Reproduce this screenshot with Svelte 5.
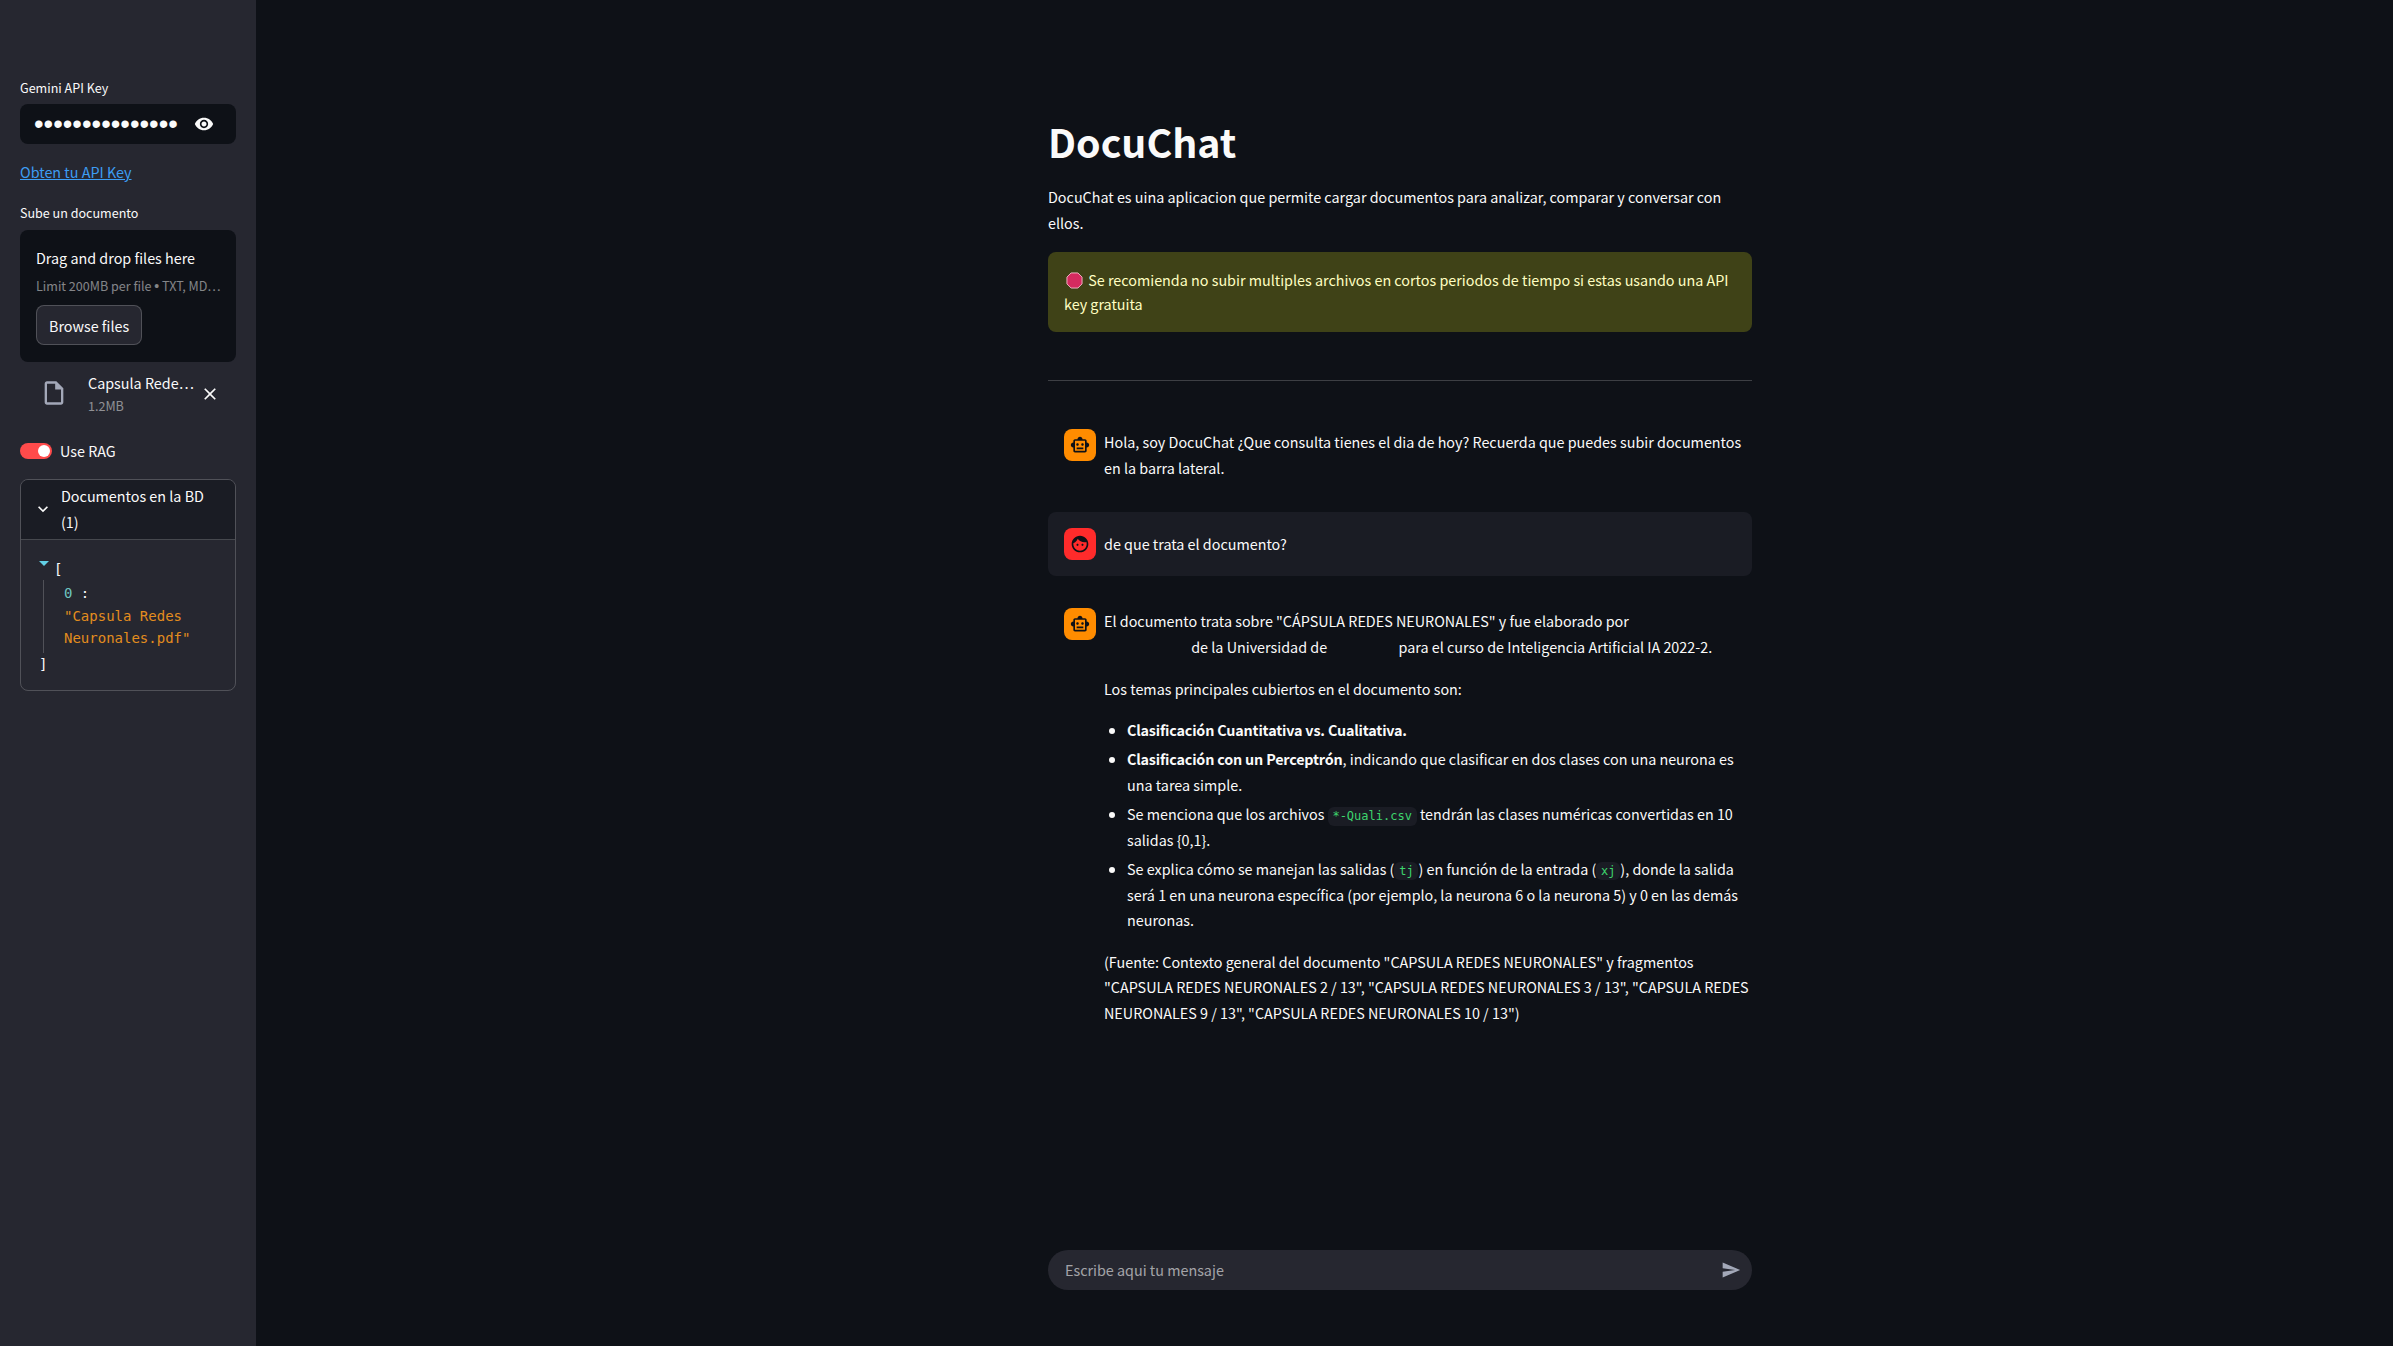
<script>
  let useRag = $state(true);
  let showKey = $state(false);
  let draft = $state('');
</script>

<div class="app">
  <aside class="sidebar">
    <label class="label" for="key">Gemini API Key</label>
    <div class="key-box">
      <input id="key" class:masked={!showKey} type={showKey ? 'text' : 'password'} value="AIzaSyD41kQ7xPz" />
      <button class="eye" aria-label="Mostrar" onclick={() => (showKey = !showKey)}>
        <svg viewBox="0 0 24 24" width="20" height="20"><path d="M12 4.5C7 4.5 2.73 7.61 1 12c1.73 4.39 6 7.5 11 7.5s9.27-3.11 11-7.5c-1.73-4.39-6-7.5-11-7.5zM12 17c-2.76 0-5-2.24-5-5s2.24-5 5-5 5 2.24 5 5-2.24 5-5 5zm0-8c-1.66 0-3 1.34-3 3s1.34 3 3 3 3-1.34 3-3-1.34-3-3-3z"/></svg>
      </button>
    </div>

    <a class="link" href="#key">Obten tu API Key</a>

    <div class="label second">Sube un documento</div>
    <section class="uploader">
      <div class="drag">Drag and drop files here</div>
      <div class="limit">Limit 200MB per file <span class="dot">•</span> TXT, MD…</div>
      <button class="browse">Browse files</button>
    </section>

    <div class="file">
      <svg class="file-icon" viewBox="0 0 24 24" width="28" height="28"><path d="M14 2H6c-1.1 0-1.99.9-1.99 2L4 20c0 1.1.89 2 1.99 2H18c1.1 0 2-.9 2-2V8l-6-6zM6 20V4h7v5h5v11H6z"/></svg>
      <div class="file-meta">
        <div class="file-name">Capsula Rede…</div>
        <div class="file-size">1.2MB</div>
      </div>
      <svg class="file-x" viewBox="0 0 24 24" width="20" height="20"><path d="M19 6.41L17.59 5 12 10.59 6.41 5 5 6.41 10.59 12 5 17.59 6.41 19 12 13.41 17.59 19 19 17.59 13.41 12z"/></svg>
    </div>

    <button class="toggle-row" onclick={() => (useRag = !useRag)}>
      <span class="toggle" class:off={!useRag}><span class="knob"></span></span>
      <span>Use RAG</span>
    </button>

    <section class="expander">
      <header class="exp-head">
        <svg viewBox="0 0 24 24" width="20" height="20"><path d="M16.59 8.59L12 13.17 7.41 8.59 6 10l6 6 6-6z"/></svg>
        <span class="exp-title">Documentos en la BD (1)</span>
      </header>
      <div class="json">
        <div class="json-open"><span class="tri"></span><span>[</span></div>
        <div class="json-items">
          <div class="json-key"><span class="idx">0</span> :</div>
          <div class="str">"Capsula Redes Neuronales.pdf"</div>
        </div>
        <div class="json-close">]</div>
      </div>
    </section>
  </aside>

  <main class="main">
    <h1>DocuChat</h1>
    <p class="intro">DocuChat es uina aplicacion que permite cargar documentos para analizar, comparar y conversar con ellos.</p>

    <div class="alert">
      <svg class="stop" viewBox="0 0 18 18" width="17" height="17"><polygon points="5.4,1 12.6,1 17,5.4 17,12.6 12.6,17 5.4,17 1,12.6 1,5.4" fill="#d42a5f" stroke="#f0b9c8" stroke-width="1"/></svg>
      Se recomienda no subir multiples archivos en cortos periodos de tiempo si estas usando una API key gratuita
    </div>

    <hr />

    <div class="messages">
      <article class="msg">
        <span class="avatar bot">
          <svg viewBox="0 0 24 24" width="20" height="20"><path d="M20 9V7c0-1.1-.9-2-2-2h-3c0-1.66-1.34-3-3-3S9 3.34 9 5H6c-1.1 0-2 .9-2 2v2c-1.66 0-3 1.34-3 3s1.34 3 3 3v4c0 1.1.9 2 2 2h12c1.1 0 2-.9 2-2v-4c1.66 0 3-1.34 3-3s-1.34-3-3-3zm-2 10H6V7h12v12zm-9-6c-.83 0-1.5-.67-1.5-1.5S8.17 10 9 10s1.5.67 1.5 1.5S9.83 13 9 13zm7.5-1.5c0 .83-.67 1.5-1.5 1.5s-1.5-.67-1.5-1.5.67-1.5 1.5-1.5 1.5.67 1.5 1.5zM8 15h8v2H8v-2z"/></svg>
        </span>
        <div class="body">
          <p>Hola, soy DocuChat ¿Que consulta tienes el dia de hoy? Recuerda que puedes subir documentos en la barra lateral.</p>
        </div>
      </article>

      <article class="msg user">
        <span class="avatar human">
          <svg viewBox="0 0 24 24" width="20" height="20"><path d="M9 11.75c-.69 0-1.25.56-1.25 1.25s.56 1.25 1.25 1.25 1.25-.56 1.25-1.25-.56-1.25-1.25-1.25zm6 0c-.69 0-1.25.56-1.25 1.25s.56 1.25 1.25 1.25 1.25-.56 1.25-1.25-.56-1.25-1.25-1.25zM12 2C6.48 2 2 6.48 2 12s4.48 10 10 10 10-4.48 10-10S17.52 2 12 2zm0 18c-4.41 0-8-3.59-8-8 0-.29.02-.58.05-.86 2.36-1.05 4.23-2.98 5.21-5.37C11.07 8.33 14.05 10 17.42 10c.78 0 1.53-.09 2.25-.26.21.71.33 1.47.33 2.26 0 4.41-3.59 8-8 8z"/></svg>
        </span>
        <div class="body">
          <p>de que trata el documento?</p>
        </div>
      </article>

      <article class="msg">
        <span class="avatar bot">
          <svg viewBox="0 0 24 24" width="20" height="20"><path d="M20 9V7c0-1.1-.9-2-2-2h-3c0-1.66-1.34-3-3-3S9 3.34 9 5H6c-1.1 0-2 .9-2 2v2c-1.66 0-3 1.34-3 3s1.34 3 3 3v4c0 1.1.9 2 2 2h12c1.1 0 2-.9 2-2v-4c1.66 0 3-1.34 3-3s-1.34-3-3-3zm-2 10H6V7h12v12zm-9-6c-.83 0-1.5-.67-1.5-1.5S8.17 10 9 10s1.5.67 1.5 1.5S9.83 13 9 13zm7.5-1.5c0 .83-.67 1.5-1.5 1.5s-1.5-.67-1.5-1.5.67-1.5 1.5-1.5 1.5.67 1.5 1.5zM8 15h8v2H8v-2z"/></svg>
        </span>
        <div class="body">
          <p>El documento trata sobre "CÁPSULA REDES NEURONALES" y fue elaborado por<br /><span class="blank name"></span> de la Universidad de <span class="blank place"></span> para el curso de Inteligencia Artificial IA 2022-2.</p>
          <p>Los temas principales cubiertos en el documento son:</p>
          <ul>
            <li><strong>Clasificación Cuantitativa vs. Cualitativa.</strong></li>
            <li><strong>Clasificación con un Perceptrón</strong>, indicando que clasificar en dos clases con una neurona es una tarea simple.</li>
            <li>Se menciona que los archivos <code>*-Quali.csv</code> tendrán las clases numéricas convertidas en 10 salidas {'{'}0,1{'}'}.</li>
            <li>Se explica cómo se manejan las salidas (<code>tj</code>) en función de la entrada (<code>xj</code>), donde la salida será 1 en una neurona específica (por ejemplo, la neurona 6 o la neurona 5) y 0 en las demás neuronas.</li>
          </ul>
          <p>(Fuente: Contexto general del documento "CAPSULA REDES NEURONALES" y fragmentos "CAPSULA REDES NEURONALES 2 / 13", "CAPSULA REDES NEURONALES 3 / 13", "CAPSULA REDES NEURONALES 9 / 13", "CAPSULA REDES NEURONALES 10 / 13")</p>
        </div>
      </article>
    </div>

    <div class="chat-input">
      <input placeholder="Escribe aqui tu mensaje" bind:value={draft} />
      <button class="send" aria-label="Enviar">
        <svg viewBox="0 0 24 24" width="20" height="20"><path d="M2.01 21L23 12 2.01 3 2 10l15 2-15 2z"/></svg>
      </button>
    </div>
  </main>
</div>

<style>
  :global(body) {
    margin: 0;
    background: #0e1117;
    color: #fafafa;
    font-family: "Noto Sans CJK SC", "Noto Sans", sans-serif;
    font-size: 14.35px;
  }
  button { font: inherit; color: inherit; background: none; border: none; padding: 0; cursor: pointer; }
  svg { display: block; fill: currentColor; flex: none; }

  .app { display: flex; min-height: 100vh; }

  .sidebar {
    width: 256px; flex: none; box-sizing: border-box;
    padding: 79px 20px 0; background: #262730;
    display: flex; flex-direction: column;
  }
  .label { font-size: 12.55px; line-height: 18px; display: block; }
  .key-box {
    margin-top: 7px; height: 40px; border-radius: 8px; background: #0e1117;
    display: flex; align-items: center; padding: 0 22px 0 14px;
  }
  .key-box input {
    flex: 1; min-width: 0; background: none; border: none; outline: none; padding: 0;
    color: #fafafa; font: inherit;
  }
  .key-box input.masked { font-family: "Liberation Sans", sans-serif; font-size: 27.4px; }
  .eye { color: #fafafa; }
  .link { margin-top: 15px; line-height: 26px; color: #3d9df3; text-decoration: underline; }
  .second { margin-top: 19px; }

  .uploader {
    margin-top: 8px; padding: 15px 16px 17px; border-radius: 8px; background: #0e1117;
    display: flex; flex-direction: column; align-items: flex-start;
  }
  .drag { line-height: 26px; }
  .limit { margin-top: 5px; font-size: 12.55px; line-height: 20px; color: rgba(250,250,250,.5); white-space: nowrap; }
  .dot { font-family: "Liberation Sans", sans-serif; font-size: 14px; }
  .browse {
    margin-top: 9px; height: 40px; padding: 0 12px; box-sizing: border-box;
    background: #262730; border: 1px solid rgba(250,250,250,.2); border-radius: 8px;
  }

  .file { margin-top: 9px; display: flex; align-items: center; padding-left: 20px; }
  .file-icon { color: #a3a8b8; margin-bottom: 2px; }
  .file-meta { margin-left: 20px; width: 112px; }
  .file-name { line-height: 24px; white-space: nowrap; }
  .file-size { margin-top: 1px; font-size: 12.55px; line-height: 20px; color: rgba(250,250,250,.5); }

  .toggle-row { margin-top: 27px; display: flex; align-items: center; gap: 8px; height: 16px; line-height: 16px; }
  .toggle { width: 32px; height: 16px; border-radius: 8px; background: #ff4b4b; display: flex; align-items: center; justify-content: flex-end; padding: 0 2px; box-sizing: border-box; }
  .toggle.off { background: #555; justify-content: flex-start; }
  .knob { width: 12px; height: 12px; border-radius: 50%; background: #fff; }

  .expander { margin-top: 20px; border: 1px solid rgba(250,250,250,.2); border-radius: 8px; }
  .exp-head {
    display: flex; align-items: center; gap: 8px; padding: 3px 16px 4px 12px;
    background: #1a1c24; border-radius: 7px 7px 0 0; line-height: 26px;
    border-bottom: 1px solid rgba(250,250,250,.2);
  }
  .exp-title { width: 150px; }

  .json { padding: 18px 0 15px; font-family: "DejaVu Sans Mono", "Liberation Mono", monospace; font-size: 14px; line-height: 22px; }
  .json-open { display: flex; gap: 5px; padding-left: 18px; }
  .tri { width: 0; height: 0; margin-top: 3px; border-left: 5px solid transparent; border-right: 5px solid transparent; border-top: 5px solid #62d0e6; }
  .json-items { margin: 0 0 0 22px; padding: 2px 0 4px 20px; border-left: 1px solid rgba(250,250,250,.2); }
  .json-key { margin-bottom: 1px; }
  .idx { color: #6ec6c0; }
  .str { color: #e38d1e; }
  .json-close { padding-left: 18px; }

  .main {
    flex: 1; min-width: 0; box-sizing: border-box; height: 100vh;
    padding: 114px 0 56px 792px; display: flex; flex-direction: column;
  }
  .main > * { width: 704px; box-sizing: border-box; flex: none; }
  h1 { margin: 0; font-size: 39.3px; line-height: 53px; font-weight: 700; }
  p { margin: 0; line-height: 25.6px; }
  .intro { margin-top: 17px; }

  .alert {
    margin-top: 17px; padding: 16px; border-radius: 8px;
    background: #3f4217; color: #ffffc2; line-height: 24px;
  }
  .stop { display: inline-block; vertical-align: -3px; margin: 0 2px 0 2px; }

  hr { margin: 48px 0 32px; border: none; border-top: 1px solid rgba(250,250,250,.2); height: 0; }

  .messages { display: flex; flex-direction: column; gap: 16px; }
  .msg { display: flex; gap: 8px; padding: 16px 0 16px 16px; border-radius: 8px; }
  .msg.user { background: #1a1c24; }
  .msg.user .body { padding-top: 3px; }
  .avatar { width: 32px; height: 32px; flex: none; border-radius: 8px; display: flex; align-items: center; justify-content: center; color: #0e1117; }
  .bot { background: #ff8c00; }
  .human { background: #ff2b2b; }
  .body { flex: 1; min-width: 0; }
  .body p + p, .body ul + p { margin-top: 16px; }
  .blank { display: inline-block; height: 1px; }
  .name { width: 84px; }
  .place { width: 65px; }

  ul { margin: 16px 0 0; padding-left: 23px; }
  li { line-height: 25.6px; }
  li + li { margin-top: 3.6px; }
  strong { letter-spacing: -0.18px; }
  code {
    font-family: "DejaVu Sans Mono", "Liberation Mono", monospace; font-size: 12px; line-height: 1;
    padding: 2.4px 4.8px; border-radius: 6px; background: #1a1c24; color: #3dd56d;
  }

  .chat-input {
    margin-top: auto; height: 40px; border-radius: 20px; background: #262730;
    display: flex; align-items: center; padding: 0 11px 0 17px;
  }
  .chat-input input {
    flex: 1; min-width: 0; background: none; border: none; outline: none; padding: 0 0 2px;
    color: #fafafa; font: inherit;
  }
  .chat-input input::placeholder { color: rgba(250,250,250,.6); opacity: 1; }
  .send { color: #a3a8b8; }
</style>
